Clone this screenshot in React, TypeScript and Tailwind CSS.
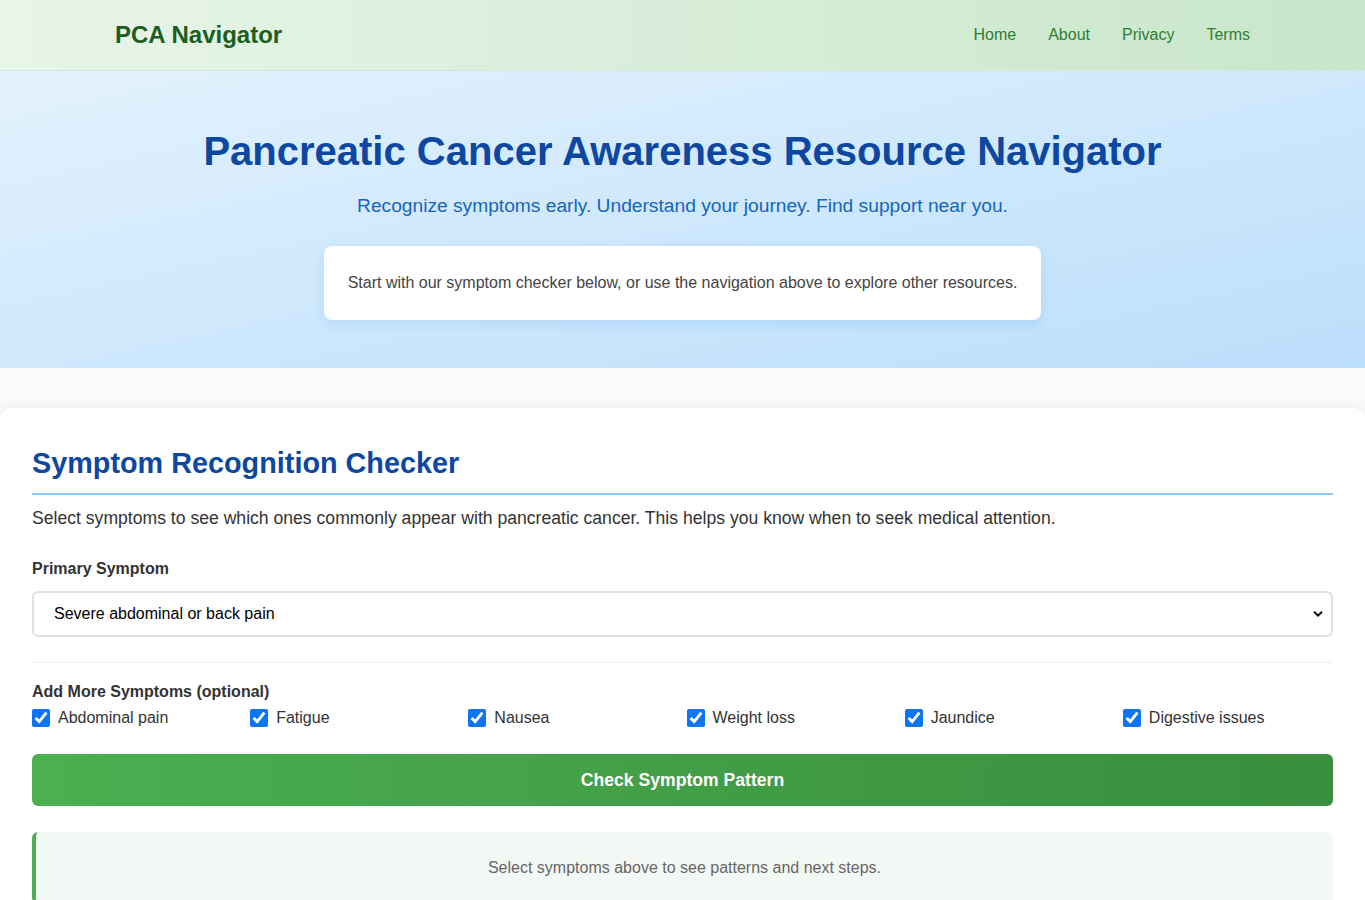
import { useState } from "react";

const NAV_LINKS = ["Home", "About", "Privacy", "Terms"] as const;

const EXTRA_SYMPTOMS = [
  "Abdominal pain",
  "Fatigue",
  "Nausea",
  "Weight loss",
  "Jaundice",
  "Digestive issues",
] as const;

export default function App() {
  const [checked, setChecked] = useState<Record<string, boolean>>(
    Object.fromEntries(EXTRA_SYMPTOMS.map((s) => [s, true]))
  );

  return (
    <div className="min-h-screen bg-[#f8fafc] font-['Liberation_Sans',Arial,sans-serif] text-[#333]">
      <header className="border-b border-[#d3e8d4] bg-gradient-to-r from-[#e8f5e9] to-[#c8e6c9]">
        <div className="flex h-[70px] items-center justify-between pl-[115px] pr-[115px]">
          <span className="text-[24px] font-bold text-[#1b5e20]">PCA Navigator</span>
          <nav className="flex items-center gap-8">
            {NAV_LINKS.map((l) => (
              <a key={l} href="#" className="text-[16px] text-[#2e7d32]">
                {l}
              </a>
            ))}
          </nav>
        </div>
      </header>

      <section className="bg-gradient-to-br from-[#e3f2fd] to-[#bbdefb] px-8 pb-[48px] pt-[56px] text-center">
        <h1 className="text-[40px] font-bold leading-[48px] text-[#0d47a1]">
          Pancreatic Cancer Awareness Resource Navigator
        </h1>
        <p className="mt-[17px] text-[19.2px] text-[#1565c0]">
          Recognize symptoms early. Understand your journey. Find support near you.
        </p>
        <div className="mx-auto mt-[25px] w-fit rounded-lg bg-white px-6 py-[25px] shadow-[0_4px_12px_rgba(33,150,243,0.15)]">
          <p className="text-[16px] text-[#444]">
            Start with our symptom checker below, or use the navigation above to explore other resources.
          </p>
        </div>
      </section>

      <main className="pt-10">
        <div className="rounded-t-xl bg-white px-8 pb-10 pt-[37px] shadow-[0_-2px_12px_rgba(0,0,0,0.05)]">
          <h2 className="border-b-2 border-[#90caf9] pb-[12px] text-[28.8px] font-bold leading-[36px] text-[#0d47a1]">
            Symptom Recognition Checker
          </h2>
          <p className="mt-[10px] text-[17.6px] text-[#333]">
            Select symptoms to see which ones commonly appear with pancreatic cancer. This helps you know when to seek medical attention.
          </p>

          <label className="mt-[26px] block text-[16px] font-bold text-[#333]">Primary Symptom</label>
          <div className="relative mt-[10px]">
            <select
              defaultValue="pain"
              className="h-[46px] w-full appearance-none rounded-md border-2 border-[#e0e0e0] bg-white pl-5 pr-10 text-[16px] text-black"
            >
              <option value="pain">Severe abdominal or back pain</option>
              <option value="jaundice">Jaundice</option>
            </select>
            <svg
              className="pointer-events-none absolute right-[10px] top-1/2 -translate-y-1/2"
              width="10"
              height="7"
              viewBox="0 0 10 7"
            >
              <path d="M1 1.2 5 5.2 9 1.2" fill="none" stroke="#111" strokeWidth="2" />
            </svg>
          </div>

          <div className="mt-[25px] border-t border-[#eee] pt-[17px]">
            <div className="text-[16px] font-bold text-[#333]">Add More Symptoms (optional)</div>
            <div className="mt-[2px] grid grid-cols-6 gap-2">
              {EXTRA_SYMPTOMS.map((s) => (
                <label key={s} className="flex items-center gap-2 text-[16px] text-[#333]">
                  <input
                    type="checkbox"
                    checked={checked[s]}
                    onChange={() => setChecked((c) => ({ ...c, [s]: !c[s] }))}
                    className="h-[18px] w-[18px] accent-[#0b75f5]"
                  />
                  {s}
                </label>
              ))}
            </div>
          </div>

          <button
            type="button"
            className="mt-[24px] h-[52px] w-full rounded-md bg-gradient-to-r from-[#4caf50] to-[#388e3c] text-[17.6px] font-bold text-white"
          >
            Check Symptom Pattern
          </button>

          <div className="mt-[26px] rounded-md border-l-4 border-[#4caf50] bg-[#f4f8f5] px-6 py-[24px] text-center text-[16px] text-[#666]">
            Select symptoms above to see patterns and next steps.
          </div>
        </div>
      </main>
    </div>
  );
}
